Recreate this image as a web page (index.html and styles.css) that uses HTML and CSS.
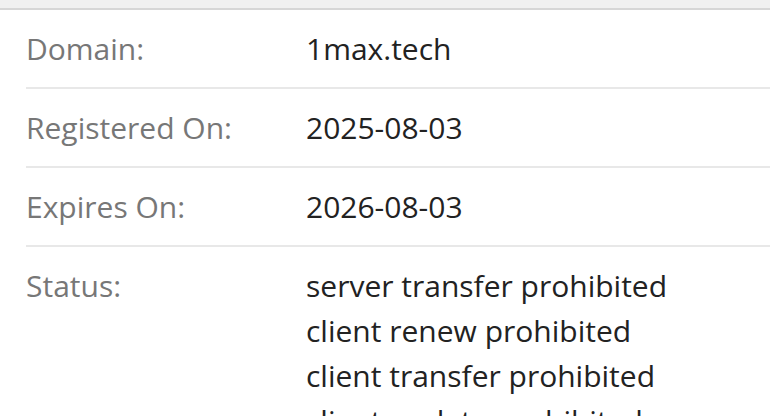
FILE: index.html
```html
<!DOCTYPE html>
<html lang="en">
<head>
    <meta charset="UTF-8">
    <meta name="viewport" content="width=device-width, initial-scale=1.0">
    <title>1max.tech - Whois</title>
    <link rel="stylesheet" href="styles.css">
</head>
<body>
    <div class="topbar"></div>
    <div class="whois">
        <div class="row">
            <div class="label">Domain:</div>
            <div class="value">1max.tech</div>
        </div>
        <div class="row">
            <div class="label">Registered On:</div>
            <div class="value">2025-08-03</div>
        </div>
        <div class="row">
            <div class="label">Expires On:</div>
            <div class="value">2026-08-03</div>
        </div>
        <div class="row">
            <div class="label">Status:</div>
            <div class="value">
                server transfer prohibited<br>
                client renew prohibited<br>
                client transfer prohibited<br>
                client update prohibited
            </div>
        </div>
    </div>
</body>
</html>
```

FILE: styles.css
```css
body {
    margin: 0;
    font-family: "Open Sans", Arial, sans-serif;
    font-size: 30px;
    line-height: 45px;
    background: #fff;
    overflow: hidden;
}
.topbar {
    height: 8px;
    background: #f0f0f0;
    border-bottom: 2px solid #d6d6d6;
}
.whois {
    margin-left: 26px;
}
.row {
    display: grid;
    grid-template-columns: 280px 1fr;
    padding: 16px 0;
    border-bottom: 2px solid #e8e8e8;
}
.label {
    color: #777;
}
.value {
    color: #222;
}
```
